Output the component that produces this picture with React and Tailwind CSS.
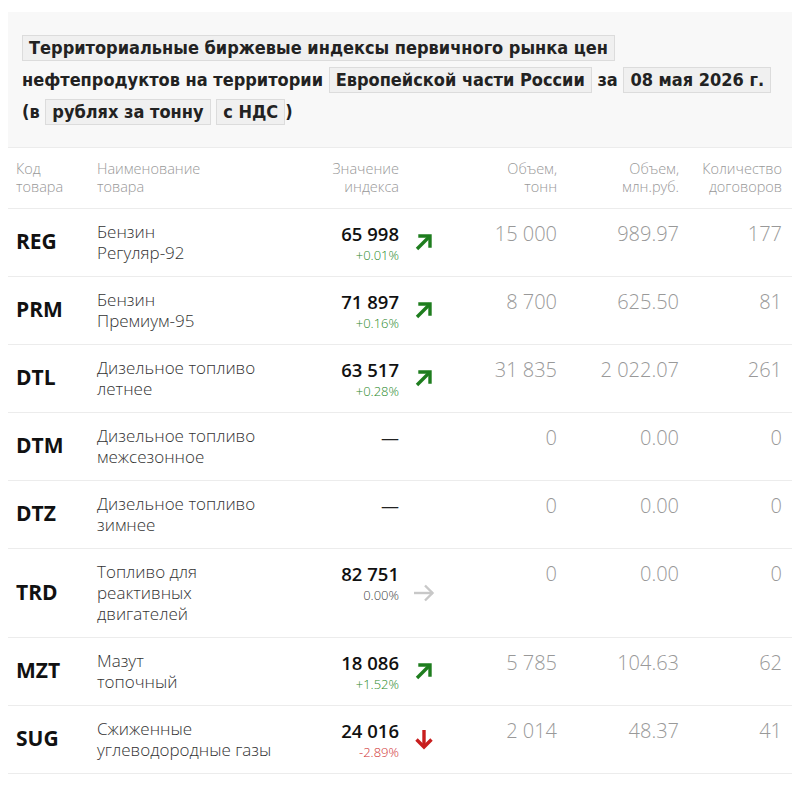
const ROWS = [
  { code: 'REG', name: ['Бензин', 'Регуляр-92'], value: '65 998', pct: '+0.01%', dir: 'up', tons: '15 000', mln: '989.97', deals: '177' },
  { code: 'PRM', name: ['Бензин', 'Премиум-95'], value: '71 897', pct: '+0.16%', dir: 'up', tons: '8 700', mln: '625.50', deals: '81' },
  { code: 'DTL', name: ['Дизельное топливо', 'летнее'], value: '63 517', pct: '+0.28%', dir: 'up', tons: '31 835', mln: '2 022.07', deals: '261' },
  { code: 'DTM', name: ['Дизельное топливо', 'межсезонное'], value: null, tons: '0', mln: '0.00', deals: '0' },
  { code: 'DTZ', name: ['Дизельное топливо', 'зимнее'], value: null, tons: '0', mln: '0.00', deals: '0' },
  { code: 'TRD', name: ['Топливо для', 'реактивных', 'двигателей'], value: '82 751', pct: '0.00%', dir: 'flat', tons: '0', mln: '0.00', deals: '0' },
  { code: 'MZT', name: ['Мазут', 'топочный'], value: '18 086', pct: '+1.52%', dir: 'up', tons: '5 785', mln: '104.63', deals: '62' },
  { code: 'SUG', name: ['Сжиженные', 'углеводородные газы'], value: '24 016', pct: '-2.89%', dir: 'down', tons: '2 014', mln: '48.37', deals: '41' },
]

const COLS = 'grid grid-cols-[81px_192px_122px_42px_116px_122px_107px]'

function Arrow({ dir }) {
  if (dir === 'up')
    return (
      <svg width="20" height="20" viewBox="0 0 20 20" fill="none" stroke="#1e7d1e" strokeWidth="3.4">
        <path d="M3 17 L16 4" />
        <path d="M6 4 H16 V14" strokeLinecap="square" />
      </svg>
    )
  if (dir === 'down')
    return (
      <svg width="22" height="22" viewBox="0 0 22 22" fill="none" stroke="#c81e1e" strokeWidth="3.4">
        <path d="M11 2 V19" />
        <path d="M3.5 11.5 L11 19 L18.5 11.5" />
      </svg>
    )
  if (dir === 'flat')
    return (
      <svg width="24" height="20" viewBox="0 0 24 20" fill="none" stroke="#c8c8c8" strokeWidth="2.4">
        <path d="M2 10 H21" />
        <path d="M13 2.5 L20.5 10 L13 17.5" />
      </svg>
    )
  return null
}

function Chip({ children }) {
  return (
    <span className="inline-block border border-[#dcdcdc] bg-[#f0f0f0] px-[6px] leading-[24px]">{children}</span>
  )
}

export default function App() {
  return (
    <div className="bg-white min-h-[800px] pt-3 px-2 font-['Open_Sans',sans-serif]">
      <div className="bg-[#f8f8f8] border-b border-[#ececec] px-[14px] pt-[20px] pb-[19px]">
        <p className="font-['DejaVu_Sans_Condensed','DejaVu_Sans',sans-serif] font-bold text-[18px] leading-[32px] text-[#222] whitespace-nowrap">
          <Chip>Территориальные биржевые индексы первичного рынка цен</Chip>
          <br />
          нефтепродуктов на территории <Chip>Европейской части России</Chip> за <Chip>08 мая 2026 г.</Chip>
          <br />
          (в <Chip>рублях за тонну</Chip> <Chip>с НДС</Chip>)
        </p>
      </div>

      <div className={`${COLS} border-b border-[#ececec] py-3 text-[14.5px] leading-[18px] text-[#999] font-light`}>
        <div className="pl-2">Код<br />товара</div>
        <div className="pl-2">Наименование<br />товара</div>
        <div className="text-right pr-1">Значение<br />индекса</div>
        <div />
        <div className="text-right pr-1">Объем,<br />тонн</div>
        <div className="text-right pr-1">Объем,<br />млн.руб.</div>
        <div className="text-right pr-2">Количество<br />договоров</div>
      </div>

      {ROWS.map((r) => (
        <div key={r.code} className={`${COLS} border-b border-[#ececec] pt-3 pb-[13px]`}>
          <div className="pl-2 self-center text-[21px] font-bold text-[#111]">{r.code}</div>
          <div className="pl-2 text-[17px] leading-[21px] text-[#333] font-light">
            {r.name.map((n) => (
              <div key={n}>{n}</div>
            ))}
          </div>
          <div className="text-right pr-1">
            {r.value ? (
              <>
                <div className="text-[18.5px] leading-[26px] font-semibold text-[#111]">{r.value}</div>
                <div
                  className={`text-[13px] leading-[16px] font-light ${
                    r.dir === 'up' ? 'text-[#2a8a2a]' : r.dir === 'down' ? 'text-[#d03030]' : 'text-[#444]'
                  }`}
                >
                  {r.pct}
                </div>
              </>
            ) : (
              <div className="text-[18px] leading-[26px] text-[#222]">—</div>
            )}
          </div>
          <div className="flex items-center justify-center">
            <Arrow dir={r.dir} />
          </div>
          <div className="text-right pr-1 text-[20px] leading-[26px] font-light text-[#999]">{r.tons}</div>
          <div className="text-right pr-1 text-[20px] leading-[26px] font-light text-[#999]">{r.mln}</div>
          <div className="text-right pr-2 text-[20px] leading-[26px] font-light text-[#999]">{r.deals}</div>
        </div>
      ))}
    </div>
  )
}
